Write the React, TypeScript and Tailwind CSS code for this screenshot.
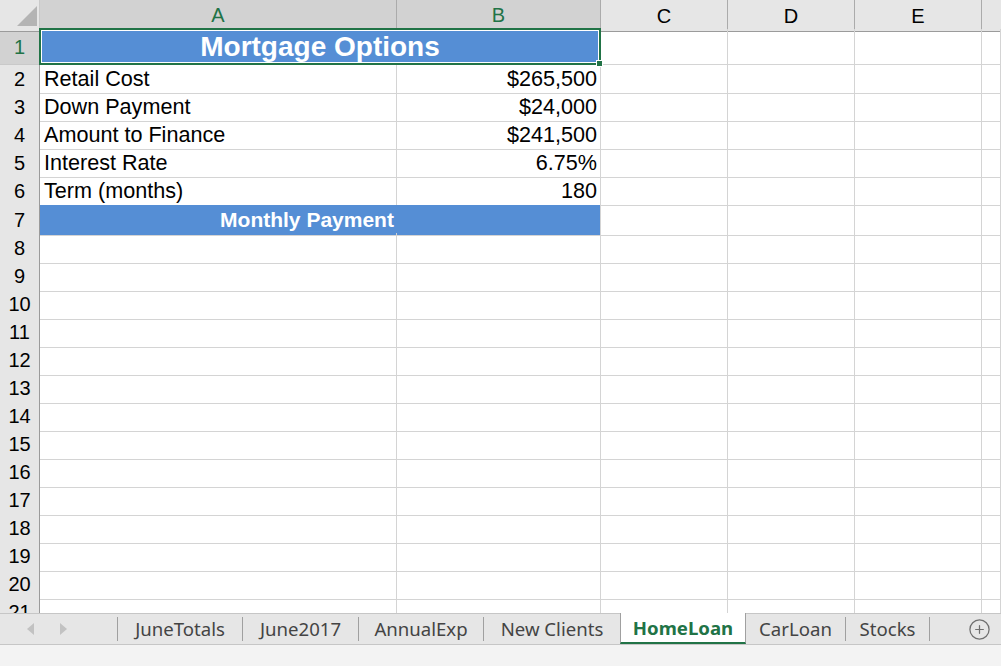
import { CirclePlus } from 'lucide-react';

const cols = 'grid grid-cols-[40px_357px_204px_127px_127px_127px_1fr]';

const data: [string, string][] = [
  ['Retail Cost', '$265,500'],
  ['Down Payment', '$24,000'],
  ['Amount to Finance', '$241,500'],
  ['Interest Rate', '6.75%'],
  ['Term (months)', '180'],
];

const tabs = [
  { name: 'JuneTotals', w: 'w-[125px]' },
  { name: 'June2017', w: 'w-[116px]' },
  { name: 'AnnualExp', w: 'w-[125px]' },
  { name: 'New Clients', w: 'w-[137px]' },
  { name: 'HomeLoan', w: 'w-[126px]', active: true },
  { name: 'CarLoan', w: 'w-[99px]' },
  { name: 'Stocks', w: 'w-[84px]' },
];

function RowHead({ n, selected }: { n: number; selected?: boolean }) {
  return (
    <div
      className={
        'flex items-center justify-center border-b border-r border-b-[#c9c9c9] border-r-[#9b9b9b] text-[20px] ' +
        (selected ? 'bg-[#d2d2d2] text-[#217346]' : 'bg-[#e6e6e6] text-black')
      }
    >
      {n}
    </div>
  );
}

function Blank({ count }: { count: number }) {
  return (
    <>
      {Array.from({ length: count }).map((_, i) => (
        <div key={i} className="border-b border-r border-[#d4d4d4]" />
      ))}
    </>
  );
}

export default function App() {
  const empty = Array.from({ length: 14 }, (_, i) => i + 8);

  return (
    <div className="flex h-[666px] w-[1001px] flex-col overflow-hidden bg-white font-['Liberation_Sans',Arial,sans-serif]">
      <div className="h-[613px] overflow-hidden">
        {/* column headers */}
        <div className={cols + ' h-[29px] text-[20px]'}>
          <div className="relative border-b border-r border-b-[#9b9b9b] border-r-[#c9c9c9] bg-[#e6e6e6]">
            <svg className="absolute left-[17px] top-[6px]" width="20" height="20" viewBox="0 0 20 20">
              <polygon points="20,0 20,20 0,20" fill="#b4b4b4" />
            </svg>
          </div>
          <div className="flex items-center justify-center border-b-2 border-r border-b-[#217346] border-r-[#ababab] bg-[#d2d2d2] text-[#217346]">A</div>
          <div className="flex items-center justify-center border-b-2 border-r border-b-[#217346] border-r-[#ababab] bg-[#d2d2d2] text-[#217346]">B</div>
          <div className="flex items-center justify-center border-b border-r border-b-[#9b9b9b] border-r-[#ababab] bg-[#e6e6e6]">C</div>
          <div className="flex items-center justify-center border-b border-r border-b-[#9b9b9b] border-r-[#ababab] bg-[#e6e6e6]">D</div>
          <div className="flex items-center justify-center border-b border-r border-b-[#9b9b9b] border-r-[#ababab] bg-[#e6e6e6]">E</div>
          <div className="border-b border-b-[#9b9b9b] bg-[#e6e6e6]" />
        </div>

        {/* row 1 */}
        <div className={cols + ' h-[36px]'}>
          <RowHead n={1} selected />
          <div className="relative col-span-2 -ml-px -mt-px flex items-center justify-center border-2 border-[#217346] bg-[#558ed5] text-[28px] font-bold leading-[32px] text-white shadow-[inset_0_0_0_1px_white]">
            Mortgage Options
            <div className="absolute -bottom-[4px] -right-[4px] h-[7px] w-[7px] border border-white bg-[#217346]" />
          </div>
          <Blank count={4} />
        </div>

        {data.map(([label, value], i) => (
          <div key={label} className={cols + ' h-[28px] text-[21.6px] leading-[28px]'}>
            <RowHead n={i + 2} />
            <div className="border-b border-r border-[#d4d4d4] pl-[4px] text-black">{label}</div>
            <div className="border-b border-r border-[#d4d4d4] pr-[3px] text-right text-black">{value}</div>
            <Blank count={4} />
          </div>
        ))}

        {/* row 7 */}
        <div className={cols + ' h-[28px]'}>
          <RowHead n={7} />
          <div className="col-span-2 flex items-center justify-center border-b border-r border-b-[#d4d4d4] border-r-[#d4d4d4] bg-[#558ed5] pr-[26px] text-[21px] font-bold leading-[28px] text-white">
            Monthly Payment
          </div>
          <Blank count={4} />
        </div>

        {empty.map((n) => (
          <div key={n} className={cols + ' h-[28px]'}>
            <RowHead n={n} />
            <Blank count={6} />
          </div>
        ))}
      </div>

      {/* sheet tabs */}
      <div className="flex h-[32px] items-stretch border-y border-[#c6c6c6] bg-[#e6e6e6] font-['Noto_Sans','Open_Sans',sans-serif] text-[18.6px] text-[#444]">
        <div className="flex w-[117px] items-center">
          <svg className="ml-[27px]" width="7" height="12" viewBox="0 0 7 12">
            <polygon points="7,0 7,12 0,6" fill="#c2c2c2" />
          </svg>
          <svg className="ml-[26px]" width="7" height="12" viewBox="0 0 7 12">
            <polygon points="0,0 0,12 7,6" fill="#c2c2c2" />
          </svg>
        </div>
        {tabs.map((t, i) =>
          t.active ? (
            <div
              key={t.name}
              className={t.w + ' -mt-px flex items-center justify-center border-x border-b-2 border-x-[#a0a0a0] border-b-[#217346] bg-white font-bold text-[#217346]'}
            >
              {t.name}
            </div>
          ) : (
            <div key={t.name} className={t.w + ' flex items-center justify-center'}>
              <div className="flex w-full items-center">
                {i > 0 && tabs[i - 1].active ? null : <div className="h-[24px] w-px bg-[#a0a0a0]" />}
                <span className="flex-1 text-center">{t.name}</span>
              </div>
            </div>
          )
        )}
        <div className="flex items-center">
          <div className="h-[24px] w-px bg-[#a0a0a0]" />
        </div>
        <div className="flex flex-1 items-center justify-end pr-[10px]">
          <CirclePlus size={23} strokeWidth={1.3} color="#6f6f6f" />
        </div>
      </div>

      {/* status bar */}
      <div className="flex-1 bg-[#f3f3f3]" />
    </div>
  );
}
